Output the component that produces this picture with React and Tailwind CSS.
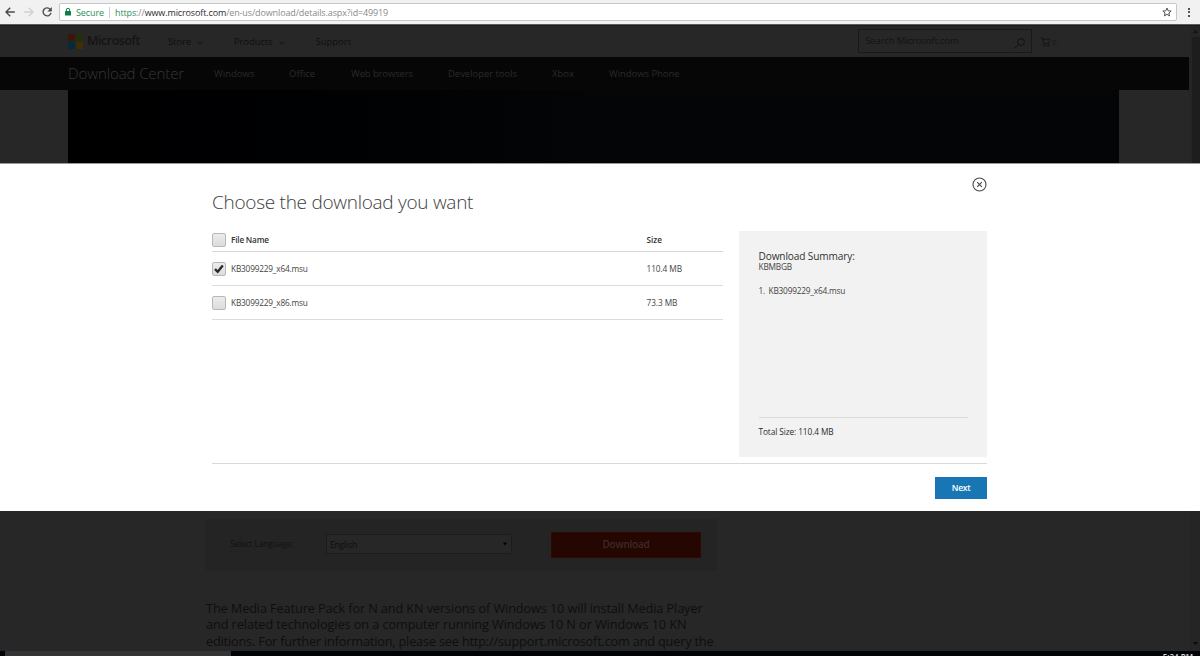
import React from "react";

function Chevron() {
  return (
    <svg width="6" height="4" viewBox="0 0 6 4" fill="none" stroke="#111" strokeWidth="0.9">
      <path d="M0.4 0.6 3 3.2 5.6 0.6" />
    </svg>
  );
}

function BrowserBar() {
  return (
    <div className="flex h-[25px] shrink-0 items-start border-b border-[#5a5d5c] bg-[#f1f1f1]">
      <div className="flex h-6 w-[59px] shrink-0 items-center">
        <svg className="ml-[5px]" width="10" height="10" viewBox="0 0 10 10" fill="none" stroke="#4b4b4b" strokeWidth="1.4">
          <path d="M9.8 5H1.2M5.2 0.8 1 5l4.2 4.2" />
        </svg>
        <svg className="ml-[9px]" width="10" height="10" viewBox="0 0 10 10" fill="none" stroke="#d0d0d0" strokeWidth="1.4">
          <path d="M0.2 5h8.6M4.8 0.8 9 5 4.8 9.2" />
        </svg>
        <svg className="ml-[8px]" width="10" height="10" viewBox="0 0 10 10">
          <path d="M8.1 2.2A4 4 0 1 0 9 5.9" fill="none" stroke="#4b4b4b" strokeWidth="1.4" />
          <path d="M9.8 0v4.4H5.4Z" fill="#4b4b4b" />
        </svg>
      </div>
      <div className="mt-[3px] flex h-[18px] w-[1118px] items-center rounded-[2px] border border-[#c6c8c7] bg-white">
        <svg className="ml-[5px]" width="6" height="8" viewBox="0 0 6 8">
          <rect x="0" y="3" width="6" height="4.6" rx="0.5" fill="#0b8043" />
          <path d="M1.3 3.2V2a1.7 1.7 0 0 1 3.4 0v1.2" fill="none" stroke="#0b8043" strokeWidth="1" />
        </svg>
        <span className="mt-px ml-[5px] w-[28px] text-[9px] tracking-[-0.09px] text-[#2b9157]">Secure</span>
        <span className="ml-[5px] h-[11px] w-px bg-[#cfcfcf]" />
        <span className="mt-px ml-[5px] text-[9px] tracking-[-0.13px] text-[#8a8a8a]">
          <span className="text-[#2b9157]">https</span>://<span className="text-[#2a2a2a]">www.microsoft.com</span>/en-us/download/details.aspx?id=49919
        </span>
        <svg className="mr-[4px] ml-auto" width="10" height="10" viewBox="0 0 24 24" fill="none" stroke="#505050" strokeWidth="2.4">
          <path d="m12 2.5 2.8 6.6 7.2.6-5.5 4.7 1.7 7L12 17.6l-6.2 3.8 1.7-7L2 9.700l7.200-.6Z" />
        </svg>
      </div>
      <div className="flex h-6 flex-1 flex-col items-center justify-center gap-[1.500px] pl-[1px]">
        <span className="size-[2px] bg-[#555]" />
        <span className="size-[2px] bg-[#555]" />
        <span className="size-[2px] bg-[#555]" />
      </div>
    </div>
  );
}

function SiteHeader() {
  return (
    <header className="flex h-[32px] shrink-0 items-center border-t border-[#1c1c1c] pl-[68px] text-[9.6px] text-[#0f0f0f]">
      <div className="mb-px grid grid-cols-2 gap-px">
        <span className="size-[7px] bg-[#3e150c]" />
        <span className="size-[7px] bg-[#20300a]" />
        <span className="size-[7px] bg-[#042b3c]" />
        <span className="size-[7px] bg-[#402e06]" />
      </div>
      <span className="mb-px ml-[4px] w-[53px] text-[12.5px] font-semibold tracking-[-0.49px] text-[#141414]">Microsoft</span>
      <span className="mt-[1px] ml-[28px] w-[23px] tracking-[-0.16px]">Store</span>
      <span className="mt-[2px] ml-[6px]"><Chevron /></span>
      <span className="mt-[1px] ml-[31px] w-[39px] tracking-[-0.16px]">Products</span>
      <span className="mt-[2px] ml-[6px]"><Chevron /></span>
      <span className="mt-[1px] ml-[30.500px] w-[36px] tracking-[-0.07px]">Support</span>
      <div className="mb-px ml-[506.500px] flex h-6 w-[174px] items-center border border-[#191919] pl-[6px]">
        <span className="tracking-[-0.16px] text-[#131313]">Search Microsoft.com</span>
        <svg className="mt-[4px] mr-[6px] ml-auto" width="11" height="11" viewBox="0 0 11 11" fill="none" stroke="#101010" strokeWidth="0.9">
          <circle cx="7" cy="4" r="3.400" />
          <path d="M4.500 6.500 0.400 10.600" />
        </svg>
      </div>
      <svg className="ml-[8px]" width="11" height="10" viewBox="0 0 11 10" fill="none" stroke="#121212" strokeWidth="0.8">
        <path d="M0.500 1h1.700l1.600 5.500h5L10 2.200H2.600" />
        <circle cx="4.300" cy="8.500" r="0.700" />
        <circle cx="8.300" cy="8.500" r="0.700" />
      </svg>
      <span className="ml-[1px] text-[8px] text-[#151515]">0</span>
    </header>
  );
}

function CenterNav() {
  return (
    <nav className="flex h-[33px] shrink-0 items-center bg-[#060606] pt-[1px] pl-[68px] text-[9.5px] text-[#2a2a2a]">
      <span className="w-[146px] pb-[2px] text-[15px] font-light tracking-[-0.1px] text-[#363636]">Download Center</span>
      <span className="w-[75px]">Windows</span>
      <span className="w-[62px]">Office</span>
      <span className="w-[97px] tracking-[-0.12px]">Web browsers</span>
      <span className="w-[104px] tracking-[-0.04px]">Developer tools</span>
      <span className="w-[57px]">Xbox</span>
      <span className="tracking-[-0.06px]">Windows Phone</span>
    </nav>
  );
}

function LanguagePicker() {
  return (
    <div className="ml-[206px] flex h-[52px] w-[512px] shrink-0 items-start bg-[#242424] text-[8.500px] text-[#111]">
      <span className="mt-[19px] ml-[24px] w-[96px] tracking-[-0.17px] whitespace-nowrap">Select Language:</span>
      <div className="mt-[15px] flex h-5 w-[186px] items-center border border-[#1c1c1c] bg-[#272727] pt-[3px] pl-[3px] text-[#0c0c0c]">
        <span className="tracking-[-0.16px]">English</span>
        <svg className="mr-[4px] mb-[3px] ml-auto" width="4" height="4" viewBox="0 0 5 4">
          <path d="M0 0h5L2.500 4Z" fill="#000" />
        </svg>
      </div>
      <div className="mt-[13px] ml-[39px] flex h-[26px] w-[150px] items-center justify-center border border-[#300800] bg-[#250600] pb-[2px] text-[10px] font-semibold tracking-[-0.23px] text-[#3b2b28]">
        Download
      </div>
    </div>
  );
}

function PageContent() {
  return (
    <main className="flex min-w-0 flex-1 flex-col overflow-hidden">
      <SiteHeader />
      <CenterNav />
      <div className="mb-[39px] ml-[68px] h-[390px] w-[1051px] shrink-0 bg-linear-to-r from-[#000001] via-[#030506] to-[#030507]" />
      <LanguagePicker />
      <div className="mt-[28.500px] ml-[206px] text-[12.700px] leading-[16.500px] whitespace-nowrap text-[#0e0e0e]">
        <p className="tracking-[-0.095px]">The Media Feature Pack for N and KN versions of Windows 10 will install Media Player</p>
        <p className="tracking-[-0.07px]">and related technologies on a computer running Windows 10 N or Windows 10 KN</p>
        <p className="tracking-[-0.165px]">editions. For further information, please see http://support.microsoft.com and query the</p>
      </div>
    </main>
  );
}

function Scrollbar() {
  return (
    <div className="flex w-[11px] shrink-0 flex-col items-center border-t border-[#1c1c1c] bg-[#252525]">
      <svg className="mt-[4px] ml-px" width="5" height="3" viewBox="0 0 5 3">
        <path d="M0 3h5L2.500 0Z" fill="#111" />
      </svg>
      <div className="mt-[4px] ml-[2px] h-[300px] w-[8px] bg-[#1d1d1d]" />
      <svg className="mt-auto mb-[5px] ml-px" width="5" height="3" viewBox="0 0 5 3">
        <path d="M0 0h5L2.500 3Z" fill="#080808" />
      </svg>
    </div>
  );
}

function Checkbox({ checked }) {
  return (
    <span className="flex size-[14px] shrink-0 items-center justify-center rounded-[2px] border border-[#b8b8b8] bg-linear-to-b from-[#ececec] to-[#dcdcdc]">
      {checked && (
        <svg width="10" height="10" viewBox="0 0 10 10" fill="none" stroke="#282828" strokeWidth="2.300">
          <path d="M1 5.200 3.700 7.800 8.800 1.500" />
        </svg>
      )}
    </span>
  );
}

function FileRow({ name, size, checked }) {
  return (
    <div className="flex h-[34px] items-center border-b border-[#dcdcdc] text-[8.300px] text-[#444]">
      <Checkbox checked={checked} />
      <span className="mt-[2px] ml-[5px] w-[415.500px] tracking-[-0.200px]">{name}</span>
      <span className="mt-[2px] tracking-[-0.08px]">{size}</span>
    </div>
  );
}

function DownloadDialog() {
  return (
    <section className="absolute inset-x-0 top-[163px] flex h-[348px] flex-col border-t border-[#999] bg-white pl-[212px]">
      <svg className="absolute top-[12.500px] left-[972px]" width="15" height="15" viewBox="0 0 15 15" fill="none" stroke="#4a4a4a">
        <circle cx="7.500" cy="7.500" r="6.500" strokeWidth="1.100" />
        <path d="M5.200 5.200l4.600 4.600M9.800 5.200 5.200 9.800" strokeWidth="1.200" />
      </svg>
      <h1 className="mt-[25px] h-[42px] text-[19px] leading-[27px] font-light tracking-[-0.280px] text-[#3c3c3c]">
        Choose the download you want
      </h1>
      <div className="flex h-[233px] w-[775px] justify-between border-b border-[#d9d9d9]">
        <div className="w-[511px]">
          <div className="flex h-[21px] items-center border-b border-[#d6d6d6] pb-[3px] text-[8.200px] font-semibold text-[#333]">
            <Checkbox />
            <span className="mt-[2px] ml-[5px] w-[415.500px] tracking-[-0.180px]">File Name</span>
            <span className="mt-[2px]">Size</span>
          </div>
          <FileRow name="KB3099229_x64.msu" size="110.4 MB" checked />
          <FileRow name="KB3099229_x86.msu" size="73.3 MB" />
        </div>
        <aside className="flex h-[225.500px] w-[248px] flex-col bg-[#f2f2f2] px-[19.500px] text-[8.300px] text-[#444]">
          <h2 className="mt-[19px] text-[10.100px] leading-[13px] tracking-[-0.120px] text-[#333]">Download Summary:</h2>
          <p className="-mt-px leading-[9px] tracking-[-0.200px]">KBMBGB</p>
          <ol className="mt-[13.500px] leading-[12px] tracking-[-0.200px]">
            <li className="flex"><span className="w-[10px]">1.</span>KB3099229_x64.msu</li>
          </ol>
          <p className="mt-auto mb-[16.500px] h-[23px] border-t border-[#d9d9d9] pt-[8px] leading-[12px] tracking-[-0.100px] text-[#2c2c2c]">
            Total Size: 110.4 MB
          </p>
        </aside>
      </div>
      <button className="mt-[13px] ml-[723px] h-[22px] w-[52px] bg-[#1776b3] pt-px text-[8.500px] font-semibold tracking-[-0.300px] text-white">
        Next
      </button>
    </section>
  );
}

export default function App() {
  return (
    <div className="relative flex h-[656px] w-[1200px] flex-col overflow-hidden bg-[#272727] font-['Open_Sans','Noto_Sans',sans-serif]">
      <BrowserBar />
      <div className="flex h-[625px] shrink-0">
        <PageContent />
        <Scrollbar />
      </div>
      <div className="flex h-[6px] shrink-0 overflow-hidden border-t border-[#1e262e] bg-[#000206]">
        <span className="ml-[5px] w-[226px] bg-[#333]" />
        <span className="mr-[7px] ml-auto pt-px text-[8px] leading-[10px] font-semibold text-[#ddd]">5:24 PM</span>
      </div>
      <DownloadDialog />
    </div>
  );
}
